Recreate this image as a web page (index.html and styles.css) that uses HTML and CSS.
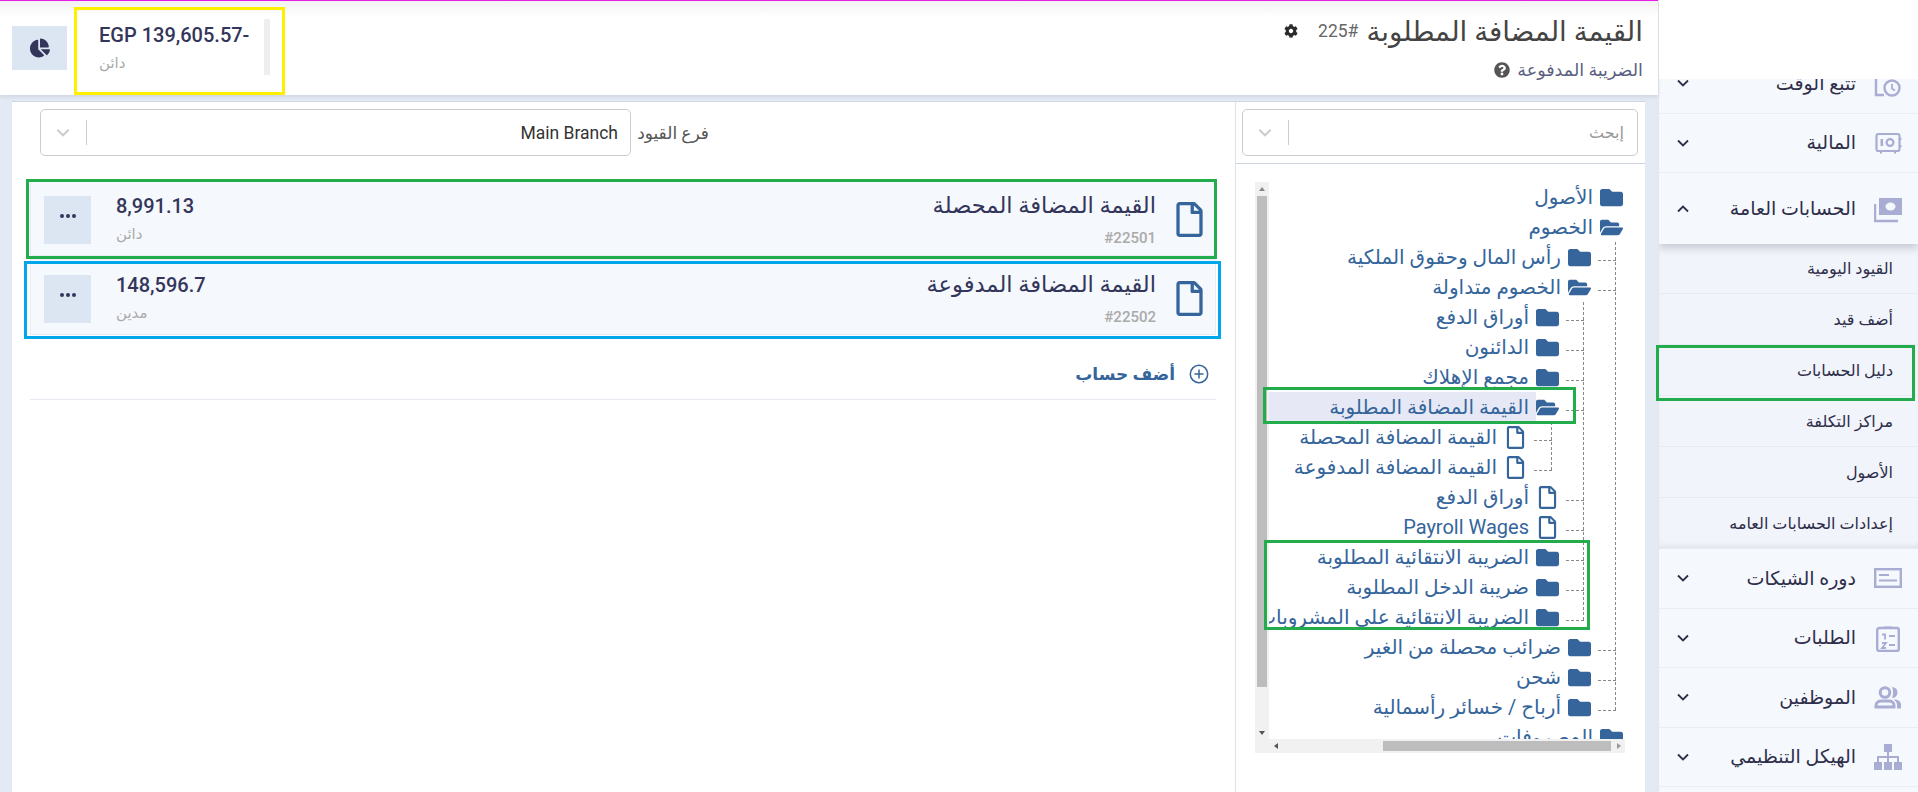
FILE: index.html
```html
<!DOCTYPE html>
<html lang="ar" dir="rtl">
<head>
  <meta charset="UTF-8">
  <title>دليل الحسابات</title>
  <link rel="stylesheet" href="styles.css">
</head>
<body>

  <!-- Icon set -->
  <svg class="icon-defs" xmlns="http://www.w3.org/2000/svg">
    <symbol id="i-folder" viewBox="0 0 512 512"><path d="M464 128H272l-64-64H48C21.49 64 0 85.49 0 112v288c0 26.51 21.49 48 48 48h416c26.51 0 48-21.49 48-48V176c0-26.51-21.49-48-48-48z"/></symbol>
    <symbol id="i-folder-open" viewBox="0 0 576 512"><path d="M572.694 292.093L500.27 416.248A63.997 63.997 0 0 1 444.989 448H45.025c-18.523 0-30.064-20.093-20.731-36.093l72.424-124.155A64 64 0 0 1 152 256h399.964c18.523 0 30.064 20.093 20.73 36.093zM152 224h328v-48c0-26.51-21.49-48-48-48H272l-64-64H48C21.49 64 0 85.49 0 112v278.046l69.077-118.418C86.214 242.25 117.989 224 152 224z"/></symbol>
    <symbol id="i-file" viewBox="0 0 384 512"><path d="M369.9 97.9L286 14C277 5 264.8-.1 252.1-.1H48C21.5 0 0 21.5 0 48v416c0 26.5 21.5 48 48 48h288c26.5 0 48-21.5 48-48V131.9c0-12.7-5.1-25-14.1-34zM332.1 128H256V51.9l76.1 76.1zM48 464V48h160v104c0 13.3 10.7 24 24 24h104v288H48z"/></symbol>
    <symbol id="i-chevron" viewBox="0 0 12 8"><path d="M1 1.5l5 5 5-5" fill="none" stroke="currentColor" stroke-width="1.8"/></symbol>
  </svg>

  <div class="app">

    <!-- Sidebar -->
    <aside class="sidebar">
      <div class="sidebar-top"></div>
      <nav class="nav">
        <a class="nav-row">
          <svg class="nav-icon" viewBox="0 0 28 28"><path d="M17 4H2v22h8" fill="none" stroke="currentColor" stroke-width="2.4"/><circle cx="18" cy="19" r="7.5" fill="none" stroke="currentColor" stroke-width="2.4"/><path d="M18 15v4.5l3 2" fill="none" stroke="currentColor" stroke-width="1.8"/></svg>
          <span class="nav-label">تتبع الوقت</span>
          <svg class="nav-chevron"><use href="#i-chevron"/></svg>
        </a>
        <a class="nav-row">
          <svg class="nav-icon" viewBox="0 0 28 28"><rect x="2.5" y="5" width="23" height="17" rx="2" fill="none" stroke="currentColor" stroke-width="2.2"/><path d="M7 22v2.5M21 22v2.5M25 10h2.5M25 17h2.5" stroke="currentColor" stroke-width="2"/><rect x="6.5" y="10" width="2.6" height="7" fill="currentColor"/><circle cx="16" cy="13.5" r="3.4" fill="none" stroke="currentColor" stroke-width="2.2"/></svg>
          <span class="nav-label">المالية</span>
          <svg class="nav-chevron"><use href="#i-chevron"/></svg>
        </a>
        <a class="nav-row nav-row-open">
          <svg class="nav-icon" viewBox="0 0 28 28"><path d="M1 9v17h23" fill="none" stroke="currentColor" stroke-width="2.4"/><path d="M5 3h23v17H5z" fill="currentColor"/><ellipse cx="16.500" cy="11.500" rx="5" ry="4" fill="#f5f8fc"/></svg>
          <span class="nav-label">الحسابات العامة</span>
          <svg class="nav-chevron nav-chevron-up"><use href="#i-chevron"/></svg>
        </a>
        <div class="subnav">
          <a class="subnav-row">القيود اليومية</a>
          <a class="subnav-row">أضف قيد</a>
          <a class="subnav-row">دليل الحسابات</a>
          <a class="subnav-row">مراكز التكلفة</a>
          <a class="subnav-row">الأصول</a>
          <a class="subnav-row">إعدادات الحسابات العامه</a>
        </div>
        <a class="nav-row">
          <svg class="nav-icon" viewBox="0 0 28 28"><rect x="1.2" y="5.200" width="25.600" height="17.600" fill="none" stroke="currentColor" stroke-width="2.400"/><path d="M5 11h10M5 16.500h18" stroke="currentColor" stroke-width="1.800"/></svg>
          <span class="nav-label">دوره الشيكات</span>
          <svg class="nav-chevron"><use href="#i-chevron"/></svg>
        </a>
        <a class="nav-row">
          <svg class="nav-icon" viewBox="0 0 28 28"><rect x="3.200" y="4" width="21.600" height="23" rx="2" fill="none" stroke="currentColor" stroke-width="2.400"/><path d="M10 5V2.500h8V5z" fill="currentColor"/><path d="M8 10.500h3v5M8 19h4l-4 5h4M15 12h6M15 21h6" fill="none" stroke="currentColor" stroke-width="1.800"/></svg>
          <span class="nav-label">الطلبات</span>
          <svg class="nav-chevron"><use href="#i-chevron"/></svg>
        </a>
        <a class="nav-row">
          <svg class="nav-icon" viewBox="0 0 28 28"><circle cx="11" cy="9.500" r="4.800" fill="none" stroke="currentColor" stroke-width="3"/><path d="M2 24v-1.500c0-3 2.500-4.500 5-4.500h8c2.500 0 5 1.500 5 4.500V24z" fill="none" stroke="currentColor" stroke-width="3"/><path d="M18 4a5.500 5.500 0 0 1 0 11c1.500-3.500 1.500-7.500 0-11zM20 16.500c4 0 7 2 7 5v4h-4v-3.500c0-2-1-3.500-3-5.500z" fill="currentColor"/></svg>
          <span class="nav-label">الموظفين</span>
          <svg class="nav-chevron"><use href="#i-chevron"/></svg>
        </a>
        <a class="nav-row">
          <svg class="nav-icon" viewBox="0 0 28 28"><path d="M10 1h8v8h-8zM0 19h8v8H0zM10 19h8v8h-8zM20 19h8v8h-8z" fill="currentColor"/><path d="M14 9v10M4 19v-5h20v5" fill="none" stroke="currentColor" stroke-width="2"/></svg>
          <span class="nav-label">الهيكل التنظيمي</span>
          <svg class="nav-chevron"><use href="#i-chevron"/></svg>
        </a>
      </nav>
    </aside>

    <!-- Content -->
    <div class="content">
      <header class="page-head">
        <div class="page-title-block">
          <div class="page-title-line">
            <h1 class="page-title">القيمة المضافة المطلوبة</h1>
            <span class="page-code">225#</span>
            <svg class="cog-icon" viewBox="0 0 512 512"><path d="M487.4 315.7l-42.600-24.600c4.300-23.200 4.300-47 0-70.200l42.600-24.600c4.900-2.800 7.100-8.600 5.500-14-11.100-35.600-30-67.800-54.700-94.600-3.800-4.100-10-5.100-14.800-2.300L380.800 110c-17.900-15.400-38.500-27.300-60.800-35.100V25.800c0-5.600-3.900-10.500-9.400-11.700-36.700-8.200-74.300-7.800-109.200 0-5.500 1.200-9.400 6.100-9.400 11.700V75c-22.200 7.900-42.800 19.800-60.800 35.100L88.700 85.500c-4.900-2.800-11-1.900-14.800 2.300-24.700 26.700-43.600 58.900-54.700 94.600-1.700 5.400.6 11.200 5.500 14L67.300 221c-4.300 23.200-4.300 47 0 70.200l-42.600 24.600c-4.900 2.800-7.100 8.600-5.500 14 11.100 35.600 30 67.800 54.700 94.600 3.800 4.100 10 5.100 14.800 2.300l42.600-24.600c17.900 15.400 38.500 27.300 60.800 35.100v49.200c0 5.600 3.900 10.500 9.400 11.700 36.700 8.200 74.300 7.800 109.200 0 5.500-1.200 9.400-6.100 9.400-11.700v-49.200c22.200-7.900 42.800-19.800 60.800-35.100l42.600 24.600c4.900 2.800 11 1.900 14.800-2.300 24.700-26.700 43.600-58.900 54.700-94.600 1.500-5.500-.7-11.300-5.600-14.100zM256 336c-44.100 0-80-35.900-80-80s35.900-80 80-80 80 35.900 80 80-35.900 80-80 80z"/></svg>
          </div>
          <div class="page-subtitle">
            <span>الضريبة المدفوعة</span>
            <svg class="help-icon" viewBox="0 0 512 512"><path d="M504 256c0 136.997-111.043 248-248 248S8 392.997 8 256C8 119.083 119.043 8 256 8s248 111.083 248 248zM262.655 90c-54.497 0-89.255 22.957-116.549 63.758-3.536 5.286-2.353 12.415 2.715 16.258l34.699 26.310c5.205 3.947 12.621 3.008 16.665-2.122 17.864-22.658 30.113-35.797 57.303-35.797 20.429 0 45.698 13.148 45.698 32.958 0 14.976-12.363 22.667-32.534 33.976C247.128 238.528 216 254.941 216 296v4c0 6.627 5.373 12 12 12h56c6.627 0 12-5.373 12-12v-1.333c0-28.462 83.186-29.647 83.186-106.667 0-58.002-60.165-102-116.531-102zM256 338c-25.365 0-46 20.635-46 46 0 25.364 20.635 46 46 46s46-20.636 46-46c0-25.365-20.635-46-46-46z"/></svg>
          </div>
        </div>
        <div class="balance-block">
          <button class="pie-btn">
            <svg class="pie-icon" viewBox="0 0 544 512"><path d="M527.79 288H290.5l158.03 158.03c6.04 6.04 15.98 6.53 22.19.68 38.7-36.46 65.32-85.61 73.13-140.86 1.34-9.46-6.51-17.85-16.06-17.85zm-15.83-64.8C503.72 103.74 408.26 8.28 288.8.04 279.68-.59 272 7.1 272 16.24V240h223.77c9.14 0 16.82-7.68 16.19-16.8zM224 288V50.71c0-9.55-8.39-17.4-17.84-16.06C86.99 51.49-4.1 155.6.14 280.37 4.5 408.51 114.83 513.59 243.03 511.98c50.4-.63 96.97-16.87 135.26-44.03 7.9-5.6 8.42-17.23 1.57-24.08L224 288z"/></svg>
          </button>
          <div class="balance">
            <div class="balance-amount">EGP 139,605.57-</div>
            <div class="balance-type">دائن</div>
          </div>
          <div class="balance-divider"></div>
        </div>
      </header>

      <div class="panels">

        <!-- Tree panel -->
        <section class="tree-panel">
          <div class="tree-search">
            <div class="select">
              <span class="select-value select-placeholder">إبحث</span>
              <span class="select-sep"></span>
              <svg class="select-chevron"><use href="#i-chevron"/></svg>
            </div>
          </div>
          <div class="tree-box">
            <div class="scroll-v">
              <span class="arrow-up"></span>
              <span class="scroll-v-thumb"></span>
              <span class="arrow-down"></span>
            </div>
            <div class="tree-view">
              <ul class="tree">
                <li><div class="node"><svg class="node-icon"><use href="#i-folder"/></svg><span class="node-label">الأصول</span></div></li>
                <li>
                  <div class="node"><svg class="node-icon"><use href="#i-folder-open"/></svg><span class="node-label">الخصوم</span></div>
                  <ul class="tree-sub">
                    <li><div class="node"><svg class="node-icon"><use href="#i-folder"/></svg><span class="node-label">رأس المال وحقوق الملكية</span></div></li>
                    <li>
                      <div class="node"><svg class="node-icon"><use href="#i-folder-open"/></svg><span class="node-label">الخصوم متداولة</span></div>
                      <ul class="tree-sub">
                        <li><div class="node"><svg class="node-icon"><use href="#i-folder"/></svg><span class="node-label">أوراق الدفع</span></div></li>
                        <li><div class="node"><svg class="node-icon"><use href="#i-folder"/></svg><span class="node-label">الدائنون</span></div></li>
                        <li><div class="node"><svg class="node-icon"><use href="#i-folder"/></svg><span class="node-label">مجمع الإهلاك</span></div></li>
                        <li>
                          <div class="node"><svg class="node-icon"><use href="#i-folder-open"/></svg><span class="node-label node-selected">القيمة المضافة المطلوبة</span></div>
                          <ul class="tree-sub">
                            <li><div class="node"><svg class="node-icon"><use href="#i-file"/></svg><span class="node-label">القيمة المضافة المحصلة</span></div></li>
                            <li><div class="node"><svg class="node-icon"><use href="#i-file"/></svg><span class="node-label">القيمة المضافة المدفوعة</span></div></li>
                          </ul>
                        </li>
                        <li><div class="node"><svg class="node-icon"><use href="#i-file"/></svg><span class="node-label">أوراق الدفع</span></div></li>
                        <li><div class="node"><svg class="node-icon"><use href="#i-file"/></svg><span class="node-label">Payroll Wages</span></div></li>
                        <li><div class="node"><svg class="node-icon"><use href="#i-folder"/></svg><span class="node-label">الضريبة الانتقائية المطلوبة</span></div></li>
                        <li><div class="node"><svg class="node-icon"><use href="#i-folder"/></svg><span class="node-label">ضريبة الدخل المطلوبة</span></div></li>
                        <li><div class="node"><svg class="node-icon"><use href="#i-folder"/></svg><span class="node-label">الضريبة الانتقائية على المشروبات</span></div></li>
                      </ul>
                    </li>
                    <li><div class="node"><svg class="node-icon"><use href="#i-folder"/></svg><span class="node-label">ضرائب محصلة من الغير</span></div></li>
                    <li><div class="node"><svg class="node-icon"><use href="#i-folder"/></svg><span class="node-label">شحن</span></div></li>
                    <li><div class="node"><svg class="node-icon"><use href="#i-folder"/></svg><span class="node-label">أرباح / خسائر رأسمالية</span></div></li>
                  </ul>
                </li>
                <li><div class="node"><svg class="node-icon"><use href="#i-folder"/></svg><span class="node-label">المصروفات</span></div></li>
              </ul>
            </div>
            <div class="scroll-h">
              <span class="arrow-left"></span>
              <span class="scroll-h-thumb"></span>
              <span class="arrow-right"></span>
            </div>
          </div>
        </section>

        <!-- Accounts panel -->
        <section class="main-panel">
          <div class="branch-filter">
            <label class="branch-label">فرع القيود</label>
            <div class="select">
              <span class="select-value">Main Branch</span>
              <span class="select-sep"></span>
              <svg class="select-chevron"><use href="#i-chevron"/></svg>
            </div>
          </div>

          <div class="account-list">
            <div class="account-row">
              <svg class="account-icon"><use href="#i-file"/></svg>
              <div class="account-name">
                <div class="account-title">القيمة المضافة المحصلة</div>
                <div class="account-code">#22501</div>
              </div>
              <div class="account-balance">
                <div class="account-amount">8,991.13</div>
                <div class="account-type">دائن</div>
              </div>
              <button class="dots-btn"><span></span><span></span><span></span></button>
            </div>
            <div class="account-row">
              <svg class="account-icon"><use href="#i-file"/></svg>
              <div class="account-name">
                <div class="account-title">القيمة المضافة المدفوعة</div>
                <div class="account-code">#22502</div>
              </div>
              <div class="account-balance">
                <div class="account-amount">148,596.7</div>
                <div class="account-type">مدين</div>
              </div>
              <button class="dots-btn"><span></span><span></span><span></span></button>
            </div>
          </div>

          <a class="add-account">
            <svg class="add-icon" viewBox="0 0 20 20"><circle cx="10" cy="10" r="8.700" fill="none" stroke="currentColor" stroke-width="1.500"/><path d="M10 5.500v9M5.500 10h9" stroke="currentColor" stroke-width="1.500"/></svg>
            <span>أضف حساب</span>
          </a>
        </section>

      </div>
    </div>

    <!-- Highlight boxes drawn over the screenshot -->
    <div class="mark mark-yellow mark-balance"></div>
    <div class="mark mark-green mark-row1"></div>
    <div class="mark mark-blue mark-row2"></div>
    <div class="mark mark-green mark-selected"></div>
    <div class="mark mark-green mark-taxes"></div>
    <div class="mark mark-green mark-nav"></div>
  </div>

</body>
</html>
```

FILE: styles.css
```css
* {
  box-sizing: border-box;
}

html, body {
  margin: 0;
  height: 100%;
  overflow: hidden;
}

body {
  font-family: Roboto, "DejaVu Sans", sans-serif;
  color: #2e2e4a;
  background: #e4eaf3;
}

.icon-defs {
  position: absolute;
  width: 0;
  height: 0;
}

.app {
  position: relative;
  display: flex;
  width: 1918px;
  height: 792px;
  overflow: hidden;
}

/* sidebar */
.sidebar {
  width: 260px;
  flex: none;
  display: flex;
  flex-direction: column;
  background: #f5f8fc;
  border-left: 1px solid #e6e6e6;
}

.sidebar-top {
  height: 79px;
  flex: none;
  background: #fff;
  position: relative;
  z-index: 2;
}

.nav {
  margin-top: -25px;
}

.nav-row {
  display: flex;
  align-items: center;
  height: 59.5px;
  padding: 0 16px 0 18px;
  border-bottom: 1px solid #eaeef4;
}

.nav-row-open {
  height: 71px;
  border-bottom: none;
  position: relative;
  box-shadow: 0 4px 8px rgba(40, 50, 80, 0.22);
  clip-path: inset(0 0 -14px 0);
}

.nav-icon {
  width: 28px;
  height: 28px;
  flex: none;
  color: #a9add4;
}

.nav-label {
  flex: 1;
  margin-right: 18px;
  font-size: 19px;
  font-weight: 500;
  white-space: nowrap;
}

.nav-chevron {
  width: 12px;
  height: 8px;
  flex: none;
  color: #2e2e4a;
}

.nav-chevron-up {
  transform: rotate(180deg);
}

.subnav {
  background: #f1f4fa;
  box-shadow: inset 0 -6px 8px -6px rgba(40, 50, 80, 0.18);
}

.subnav-row {
  display: flex;
  align-items: center;
  height: 51px;
  padding-right: 25px;
  font-size: 16px;
  font-weight: 500;
  border-bottom: 1px solid #e6eaf1;
}

.subnav-row:first-child {
  height: 50px;
}

/* content */
.content {
  flex: 1;
  min-width: 0;
  display: flex;
  flex-direction: column;
}

.page-head {
  height: 95px;
  flex: none;
  display: flex;
  justify-content: space-between;
  border-top: 1px solid #e81ce8;
  padding-right: 15px;
  background: linear-gradient(#f2f2f2, #fff 16px);
  box-shadow: 0 2px 4px rgba(60, 70, 100, 0.12);
}

.page-title-block {
  padding-top: 13px;
}

.page-title-line {
  display: flex;
  align-items: center;
  height: 34px;
}

.page-title {
  margin: 0;
  font-size: 27.7px;
  font-weight: 400;
  color: #444;
}

.page-code {
  margin-right: 8px;
  font-size: 17.5px;
  color: #666;
}

.cog-icon {
  width: 14px;
  height: 14px;
  margin-right: 20px;
  fill: #2b2b2b;
}

.page-subtitle {
  display: flex;
  align-items: center;
  margin-top: 12px;
  font-size: 17.5px;
  color: #5a5f80;
}

.help-icon {
  width: 16px;
  height: 16px;
  margin-right: 7px;
  fill: #555;
}

.balance-block {
  display: flex;
  direction: ltr;
  padding-left: 12px;
}

.pie-btn {
  width: 55px;
  height: 44px;
  margin-top: 25px;
  padding: 0;
  border: none;
  background: #dce6f2;
  display: flex;
  align-items: center;
  justify-content: center;
}

.pie-icon {
  width: 20px;
  height: 20px;
  fill: #33365a;
}

.balance {
  width: 197px;
  padding: 21px 0 0 32px;
}

.balance-amount {
  font-size: 20px;
  font-weight: 500;
  line-height: 26px;
  color: #33365a;
  white-space: nowrap;
}

.balance-type,
.account-type {
  font-size: 15px;
  color: #aaa;
  line-height: 20px;
}

.balance-type {
  margin-top: 5px;
  direction: rtl;
  text-align: left;
}

.balance-divider {
  width: 6px;
  height: 56px;
  margin-top: 18px;
  background: #eee;
}

.panels {
  flex: 1;
  min-height: 0;
  display: flex;
  padding: 6px 13px 0 12px;
}

.main-panel,
.tree-panel {
  background: #fff;
  border-top: 1px solid #cfd6e0;
}

/* tree */
.tree-panel {
  width: 410px;
  flex: none;
  border-left: 1px solid #dfe3e9;
  display: flex;
  flex-direction: column;
}

.tree-search {
  height: 62px;
  flex: none;
  padding: 7px 7px 0 6px;
  border-bottom: 1px solid #ccd3dc;
}

.tree-box {
  margin: 18px 20px 0 19px;
  height: 571px;
  display: grid;
  grid-template-columns: 14px 1fr;
  grid-template-rows: 1fr 14px;
  direction: ltr;
}

.scroll-v {
  position: relative;
  background: #f1f1f1;
}

.scroll-v-thumb {
  position: absolute;
  top: 14px;
  left: 2px;
  width: 10px;
  height: 491px;
  background: #bdbdbd;
}

.arrow-up,
.arrow-down {
  position: absolute;
  left: 4px;
  border-left: 3px solid transparent;
  border-right: 3px solid transparent;
}

.arrow-up {
  top: 5px;
  border-bottom: 4px solid #888;
}

.arrow-down {
  bottom: 4px;
  border-top: 4px solid #555;
}

.tree-view {
  overflow: hidden;
  direction: rtl;
  padding-right: 2px;
}

.scroll-h {
  grid-column: 1 / 3;
  position: relative;
  background: #f1f1f1;
}

.scroll-h-thumb {
  position: absolute;
  top: 2px;
  left: 128px;
  width: 228px;
  height: 10px;
  background: #bdbdbd;
}

.arrow-left,
.arrow-right {
  position: absolute;
  top: 4px;
  border-top: 3px solid transparent;
  border-bottom: 3px solid transparent;
}

.arrow-left {
  left: 19px;
  border-right: 4px solid #555;
}

.arrow-right {
  right: 4px;
  border-left: 4px solid #999;
}

.tree,
.tree-sub {
  list-style: none;
  margin: 0;
  padding: 0;
}

.tree-sub {
  position: relative;
  margin-right: 32px;
}

/* dashed connectors */
.tree-sub::before {
  content: "";
  position: absolute;
  top: 0;
  bottom: 12px;
  right: -25px;
  border-right: 1px dashed #888;
}

.tree-sub > li {
  position: relative;
}

.tree-sub > li::before {
  content: "";
  position: absolute;
  top: 18px;
  right: -25px;
  width: 18px;
  border-top: 1px dashed #888;
}

.node {
  display: flex;
  align-items: center;
  height: 30px;
  color: #35659b;
  white-space: nowrap;
}

.node-icon {
  width: 23px;
  height: 23px;
  flex: none;
  overflow: visible;
  fill: #35659b;
}

.node-label {
  flex: 1;
  padding-right: 7px;
  font-size: 20px;
  line-height: 30px;
}

.node-selected {
  background: #e6e9f5;
}

/* selects */
.select {
  display: flex;
  align-items: center;
  flex: 1;
  height: 47px;
  padding: 0 13px 0 15px;
  background: #fff;
  border: 1px solid #ccc;
  border-radius: 5px;
}

.select-value {
  flex: 1;
  font-size: 17.5px;
  color: #333;
}

.select-placeholder {
  font-size: 16px;
  color: #999;
}

.select-sep {
  width: 1px;
  height: 25px;
  margin: 0 0 0 16px;
  background: #ccc;
}

.select-chevron {
  width: 14px;
  height: 9px;
  color: #ccc;
}

/* accounts */
.main-panel {
  flex: 1;
  min-width: 0;
}

.branch-filter {
  display: flex;
  align-items: center;
  width: 669px;
  margin: 7px auto 0 28px;
}

.branch-label {
  width: 78px;
  font-size: 17px;
  color: #555;
}

.branch-filter .select {
  padding-right: 12px;
}

.account-list {
  margin: 24px 19px 0 18px;
  display: flex;
  flex-direction: column;
  gap: 3px;
}

.account-row {
  display: flex;
  height: 76px;
  padding: 0 12px 0 13px;
  background: #f5f8fc;
  border: 1px solid #e8edf4;
}

.account-icon {
  width: 27px;
  height: 35px;
  flex: none;
  margin: 21px 0 0 20px;
  fill: #35659b;
}

.account-name {
  flex: 1;
  padding-top: 10px;
}

.account-title {
  font-size: 22.6px;
  line-height: 30px;
  color: #33365a;
}

.account-code {
  margin-top: 7px;
  font-size: 15px;
  font-weight: 500;
  line-height: 20px;
  color: #aaa;
}

.account-balance {
  width: 98px;
  padding-top: 10px;
  margin-left: 25px;
  direction: ltr;
  text-align: left;
}

.account-amount {
  font-size: 20px;
  font-weight: 500;
  line-height: 30px;
  color: #33365a;
}

.account-type {
  margin-top: 3px;
  direction: rtl;
  text-align: left;
}

.dots-btn {
  width: 47px;
  height: 48px;
  margin-top: 15px;
  padding: 0 0 8px;
  border: none;
  background: #dce6f2;
  display: flex;
  align-items: center;
  justify-content: center;
  gap: 2px;
}

.dots-btn span {
  width: 4px;
  height: 4px;
  border-radius: 50%;
  background: #33365a;
}

.add-account {
  display: flex;
  align-items: center;
  gap: 14px;
  height: 65px;
  margin: 0 19px 0 18px;
  padding: 18px 7px 5px;
  font-size: 17px;
  font-weight: 700;
  color: #35659b;
  border-bottom: 1px solid #e7ebf1;
}

.add-icon {
  width: 20px;
  height: 20px;
}

/* highlight boxes */
.mark {
  position: absolute;
  border: 3px solid;
  pointer-events: none;
}

.mark-yellow { border-color: #fff000; }
.mark-green { border-color: #22ac4c; }
.mark-blue { border-color: #00a7ea; }

.mark-balance { left: 74px; top: 7px; width: 211px; height: 88px; }
.mark-row1 { left: 26px; top: 179px; width: 1191px; height: 80px; }
.mark-row2 { left: 24px; top: 261px; width: 1197px; height: 78px; }
.mark-selected { left: 1263px; top: 387px; width: 313px; height: 37px; }
.mark-taxes { left: 1264px; top: 540px; width: 326px; height: 90px; }
.mark-nav { left: 1656px; top: 345px; width: 259px; height: 56px; }
```
